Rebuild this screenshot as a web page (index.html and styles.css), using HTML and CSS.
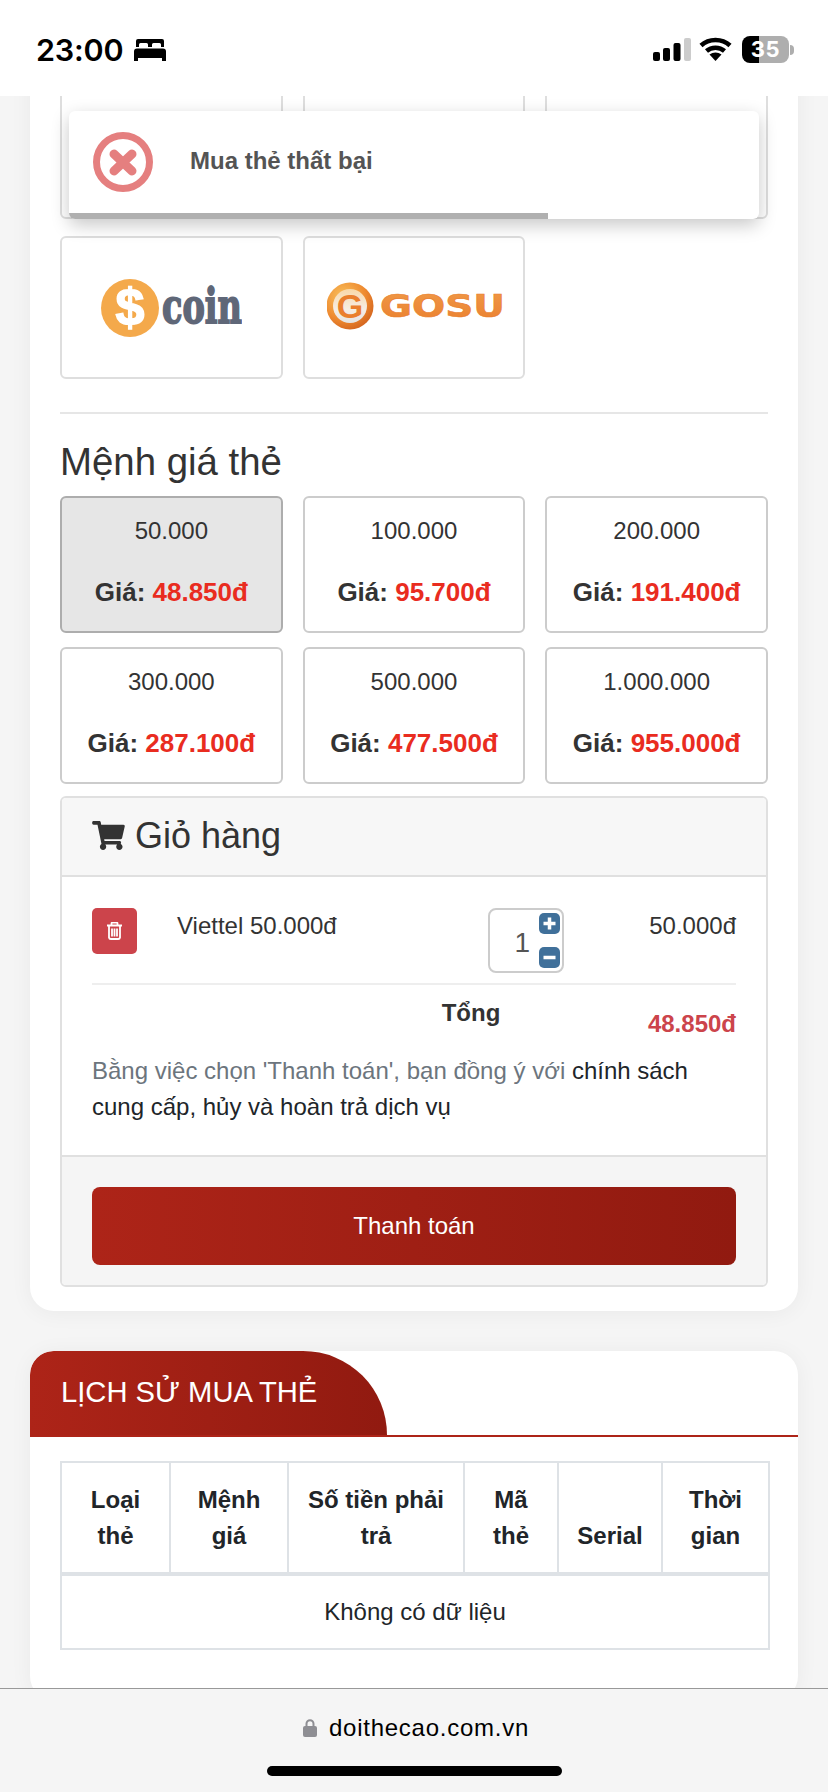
FILE: index.html
```html
<!DOCTYPE html>
<html lang="vi">
<head>
<meta charset="utf-8">
<title>Mua thẻ</title>
<link rel="stylesheet" href="styles.css">
</head>
<body>
<div class="phone">
  <header class="status">
    <div class="status-left">
      <span class="time">23:00</span>
      <svg class="bed" viewBox="0 0 32 22"><path d="M4 0h24a2 2 0 0 1 2 2v6h-3V5.500a1.500 1.500 0 0 0-1.500-1.500h-6A1.500 1.500 0 0 0 18 5.500V8h-4V5.500A1.500 1.500 0 0 0 12.500 4h-6A1.500 1.500 0 0 0 5 5.500V8H2V2a2 2 0 0 1 2-2z"/><path d="M3 9.500h26a3 3 0 0 1 3 3V19H0v-6.500a3 3 0 0 1 3-3zM0 19h4v3H0zM28 19h4v3h-4z"/></svg>
    </div>
    <div class="status-right">
      <svg class="signal" viewBox="0 0 38 23"><rect y="14" width="7" height="9" rx="2"/><rect x="10" y="10" width="7" height="13" rx="2"/><rect x="20.500" y="5" width="7" height="18" rx="2"/><rect class="signal-off" x="31" width="7" height="23" rx="2"/></svg>
      <svg class="wifi" viewBox="0 0 33 24"><path class="arc" d="M2 8.500C10 1 23 1 31 8.500"/><path class="arc" d="M7.500 14C12.500 9.500 20.500 9.500 25.500 14"/><path d="M16.500 24l-6-6.500c3.500-2.800 8.500-2.800 12 0z"/></svg>
      <div class="battery"><span>35</span></div>
      <i class="battery-nub"></i>
    </div>
  </header>

  <main class="page">
    <div class="toast">
      <svg class="toast-icon" viewBox="0 0 60 60"><circle cx="30" cy="30" r="26.500"/><path d="M21 22l18 17M39 22L21 39"/></svg>
      <span class="toast-text">Mua thẻ thất bại</span>
      <i class="toast-bar"></i>
    </div>

    <section class="card card-buy">
      <div class="providers">
        <div class="provider"></div>
        <div class="provider"></div>
        <div class="provider"></div>
        <div class="provider">
          <svg class="logo-scoin" viewBox="0 0 141 58">
            <circle cx="29" cy="29" r="29"/>
            <text class="scoin-dollar" x="29" y="46" text-anchor="middle">$</text>
            <text class="scoin-word" transform="translate(61 44) scale(.7 1)">coin</text>
          </svg>
        </div>
        <div class="provider">
          <svg class="logo-gosu" viewBox="0 0 176 48">
            <defs>
              <radialGradient id="orb" cx=".35" cy=".3" r=".8"><stop offset="0" stop-color="#f9c15c"/><stop offset=".6" stop-color="#ee8a30"/><stop offset="1" stop-color="#cf5e1c"/></radialGradient>
              <linearGradient id="orbInner" x1="0" y1="0" x2="0" y2="1"><stop offset="0" stop-color="#f9d8a8"/><stop offset=".6" stop-color="#f6ede4"/><stop offset="1" stop-color="#e4e4e4"/></linearGradient>
              <linearGradient id="gosuText" x1="0" y1="0" x2="0" y2="1"><stop offset="0" stop-color="#f09a48"/><stop offset="1" stop-color="#ea7f2e"/></linearGradient>
            </defs>
            <circle cx="23" cy="24" r="23.500" fill="url(#orb)"/>
            <circle cx="23" cy="24" r="17" fill="url(#orbInner)"/>
            <text class="gosu-g" x="23" y="36" text-anchor="middle">G</text>
            <text class="gosu-word" x="53" y="35" textLength="125" lengthAdjust="spacingAndGlyphs" fill="url(#gosuText)">GOSU</text>
          </svg>
        </div>
      </div>

      <hr class="divider">
      <h3 class="section-title">Mệnh giá thẻ</h3>

      <div class="prices">
        <div class="price is-active"><span>50.000</span><b>Giá: <em>48.850đ</em></b></div>
        <div class="price"><span>100.000</span><b>Giá: <em>95.700đ</em></b></div>
        <div class="price"><span>200.000</span><b>Giá: <em>191.400đ</em></b></div>
        <div class="price"><span>300.000</span><b>Giá: <em>287.100đ</em></b></div>
        <div class="price"><span>500.000</span><b>Giá: <em>477.500đ</em></b></div>
        <div class="price"><span>1.000.000</span><b>Giá: <em>955.000đ</em></b></div>
      </div>

      <div class="cart">
        <div class="cart-head">
          <svg class="cart-icon" viewBox="0 0 576 512"><path d="M528.120 301.319l47.273-208C578.806 78.301 567.391 64 551.990 64H159.208l-9.166-44.810C147.758 8.021 137.930 0 126.529 0H24C10.745 0 0 10.745 0 24v16c0 13.255 10.745 24 24 24h69.883l70.248 343.435C147.325 417.100 136 435.222 136 456c0 30.928 25.072 56 56 56s56-25.072 56-56c0-15.674-6.447-29.835-16.824-40h209.647C430.447 426.165 424 440.326 424 456c0 30.928 25.072 56 56 56s56-25.072 56-56c0-22.172-12.888-41.332-31.579-50.405l5.517-24.276c3.413-15.018-8.002-29.319-23.403-29.319H218.117l-6.545-32h293.145c11.206 0 20.920-7.754 23.403-18.681z"/></svg>
          <span>Giỏ hàng</span>
        </div>
        <div class="cart-body">
          <div class="cart-item">
            <button class="trash" type="button">
              <svg viewBox="0 0 15 18"><path class="trash-lid" d="M0 3.500h15M4.500 3V1.500a.800.800 0 0 1 .8-.8h4.400a.800.800 0 0 1 .8.800V3"/><path class="trash-can" d="M2 4v11.500A1.800 1.800 0 0 0 3.800 17h7.400a1.800 1.800 0 0 0 1.800-1.500V4M5 6.500v8M7.500 6.500v8M10 6.500v8"/></svg>
            </button>
            <span class="item-name">Viettel 50.000đ</span>
            <div class="qty">
              <span class="qty-value">1</span>
              <div class="qty-buttons">
                <i class="qty-btn"><svg viewBox="0 0 21 21"><path d="M10.500 4.500v12M4.500 10.500h12"/></svg></i>
                <i class="qty-btn"><svg viewBox="0 0 21 21"><path d="M4.500 10.500h12"/></svg></i>
              </div>
            </div>
            <span class="item-price">50.000đ</span>
          </div>
          <div class="cart-total">
            <strong class="total-label">Tổng</strong>
            <strong class="total-value">48.850đ</strong>
          </div>
          <p class="terms">Bằng việc chọn 'Thanh toán', bạn đồng ý với <a>chính sách</a> <a>cung cấp, hủy và hoàn trả dịch vụ</a></p>
        </div>
        <div class="cart-foot">
          <button class="pay" type="button">Thanh toán</button>
        </div>
      </div>
    </section>

    <section class="card card-history">
      <div class="tab-line"><h2 class="tab">LỊCH SỬ MUA THẺ</h2></div>
      <table class="history">
        <colgroup><col class="c1"><col class="c2"><col class="c3"><col class="c4"><col class="c5"><col class="c6"></colgroup>
        <thead>
          <tr><th>Loại thẻ</th><th>Mệnh giá</th><th>Số tiền phải trả</th><th>Mã thẻ</th><th>Serial</th><th>Thời gian</th></tr>
        </thead>
        <tbody>
          <tr><td colspan="6">Không có dữ liệu</td></tr>
        </tbody>
      </table>
    </section>
  </main>

  <footer class="urlbar">
    <div class="url">
      <svg class="lock" viewBox="0 0 14 18"><path class="lock-shackle" d="M3.500 8V4.800a3.500 3.500 0 0 1 7 0V8"/><rect y="7" width="14" height="11" rx="2"/></svg>
      <span>doithecao.com.vn</span>
    </div>
    <i class="home"></i>
  </footer>
</div>
</body>
</html>
```

FILE: styles.css
```css
* { box-sizing: border-box; }
html, body { margin: 0; padding: 0; }
body { background: #f5f5f5; font-family: "Liberation Sans", Arial, sans-serif; color: #333; font-size: 24px; line-height: 36px; }
.phone { width: 828px; height: 1792px; display: flex; flex-direction: column; overflow: hidden; }

/* status bar */
.status { flex: 0 0 96px; background: #fff; display: flex; justify-content: space-between; padding: 36px 34px 0 36px; position: relative; z-index: 3; }
.status-left { display: flex; align-items: flex-start; gap: 11px; height: 28px; }
.time { font-family: Inter, "Liberation Sans", sans-serif; font-weight: 600; font-size: 30.500px; line-height: 28px; color: #000; letter-spacing: -.2px; }
.bed { width: 32px; height: 22px; margin-top: 3px; fill: #000; }
.status-right { display: flex; align-items: flex-start; height: 28px; }
.signal { width: 38px; height: 23px; margin-top: 2px; fill: #000; }
.signal-off { fill: #ccc; }
.wifi { width: 33px; height: 24px; margin: 1px 0 0 8px; fill: #000; }
.wifi .arc { fill: none; stroke: #000; stroke-width: 4.500; stroke-linecap: butt; }
.battery { width: 47px; height: 27px; margin-left: 10px; border-radius: 8px; background: linear-gradient(90deg, #000 0 36%, #aeaeae 36% 100%); text-align: center; }
.battery span { display: block; font-family: Inter, "Liberation Sans", sans-serif; font-weight: 700; font-size: 22px; line-height: 27px; color: #fff; letter-spacing: .5px; }
.battery-nub { width: 4px; height: 10px; margin: 9px 0 0 1px; background: #aeaeae; border-radius: 0 4px 4px 0; }

/* page */
.page { flex: 1 1 auto; min-height: 0; padding: 0 30px; overflow: hidden; position: relative; }
.card { background: #fff; border-radius: 24px; box-shadow: 0 2px 22px rgba(0, 0, 0, .05); padding: 0 30px; }
.card-buy { margin-top: -40px; padding-top: 20px; padding-bottom: 24px; }
.card-history { margin-top: 40px; padding: 0 0 50px; overflow: hidden; }

/* toast */
.toast { position: absolute; z-index: 2; top: 15px; left: 69px; width: 690px; height: 108px; background: #fff; border-radius: 6px; box-shadow: 0 6px 18px rgba(0, 0, 0, .22); display: flex; align-items: center; padding: 0 0 6px 24px; overflow: hidden; }
.toast-icon { width: 60px; height: 60px; fill: none; stroke: #e57f7f; }
.toast-icon circle { stroke-width: 7; }
.toast-icon path { stroke-width: 9; stroke-linecap: round; }
.toast-text { margin: 0 0 2px 37px; font-weight: 700; color: #545454; }
.toast-bar { position: absolute; left: 0; bottom: 0; width: 479px; height: 6px; background: #b0b0b0; }

/* providers */
.providers { display: grid; grid-template-columns: repeat(3, 1fr); gap: 17px 20px; }
.provider { height: 143px; border: 2px solid #dedede; border-radius: 6px; background: #fff; display: flex; align-items: center; justify-content: center; }
.logo-scoin { width: 141px; height: 58px; }
.logo-scoin circle { fill: #f4a94b; }
.scoin-dollar { font-family: "Liberation Sans", sans-serif; font-weight: 700; font-size: 52px; fill: #fff; stroke: #fff; stroke-width: 1.500; }
.scoin-word { font-family: "DejaVu Serif", serif; font-weight: 700; font-size: 48px; fill: #5f6778; stroke: #5f6778; stroke-width: 1.800; }
.logo-gosu { width: 176px; height: 48px; margin: -4px 0 0 2px; }
.gosu-g { font-family: "Liberation Sans", sans-serif; font-weight: 700; font-size: 34px; fill: #ea7f2e; }
.gosu-word { font-family: "DejaVu Sans", sans-serif; font-weight: 700; font-size: 32px; stroke: #ea7f2e; stroke-width: .6px; }

.divider { border: 0; border-top: 2px solid #e6e6e6; margin: 33px 0 0; }
.section-title { margin: 26px 0 12px; font-weight: 400; font-size: 38.400px; line-height: 44px; color: #333; }

/* prices */
.prices { display: grid; grid-template-columns: repeat(3, 1fr); gap: 14px 20px; }
.price { border: 2px solid #ccc; border-radius: 6px; padding: 15px 0 21px; display: flex; flex-direction: column; gap: 25px; text-align: center; }
.price.is-active { background: #e6e6e6; border-color: #adadad; }
.price b { font-size: 26px; }
.price em { font-style: normal; color: #e92c1f; }

/* cart */
.cart { margin-top: 12px; border: 2px solid #e0e0e0; border-radius: 6px; overflow: hidden; }
.cart-head { height: 79px; background: #f7f7f7; border-bottom: 2px solid #e0e0e0; padding: 0 0 2px 30px; display: flex; align-items: center; gap: 10px; font-size: 36px; }
.cart-icon { width: 33px; height: 29px; fill: #333; }
.cart-body { padding: 31px 30px 30px; }
.cart-item { display: flex; align-items: flex-start; height: 77px; border-bottom: 2px solid #eee; }
.trash { width: 45px; height: 46px; padding: 0; border: 0; border-radius: 5px; background: #cc444b; display: flex; align-items: center; justify-content: center; }
.trash svg { width: 15px; height: 18px; fill: none; stroke: #fff; stroke-width: 1.800; }
.item-name { margin: 0 auto 0 40px; white-space: nowrap; }
.qty { width: 76px; height: 65px; border: 2px solid #ccc; border-radius: 8px; display: flex; padding: 3px 2px 3px 0; }
.qty-value { flex: 1; text-align: right; padding-right: 9px; font-size: 28px; line-height: 59px; color: #555; }
.qty-buttons { display: flex; flex-direction: column; justify-content: space-between; }
.qty-btn { display: block; width: 21px; height: 21px; border-radius: 5px; background: #40709a; }
.qty-btn svg { display: block; width: 21px; height: 21px; fill: none; stroke: #fff; stroke-width: 3.500; }
.item-price { width: 172px; text-align: right; }
.cart-total { display: grid; grid-template-columns: 286px 186px 172px; padding-top: 10px; }
.total-label { grid-column: 2; text-align: center; }
.total-value { grid-column: 3; text-align: right; color: #cc444b; margin-top: 11px; }
.terms { margin: 11px 0 0; color: #6c757d; }
.terms a { color: #212529; }
.cart-foot { background: #f5f5f5; border-top: 2px solid #e0e0e0; padding: 30px 30px 20px; }
.pay { display: block; width: 100%; height: 78px; border: 0; border-radius: 8px; background: linear-gradient(90deg, #ad2418, #911a10); color: #fff; font: 24px/36px "Liberation Sans", Arial, sans-serif; }

/* history */
.tab-line { border-bottom: 2px solid #ad2418; }
.tab { width: 357px; height: 84px; margin: 0; padding: 0 0 2px 31px; border-radius: 24px 88px 0 0; background: linear-gradient(90deg, #ad2418, #911a10); color: #fff; font-weight: 400; font-size: 29.200px; line-height: 82px; white-space: nowrap; }
.history { width: 708px; margin: 24px 30px 0; border-collapse: collapse; table-layout: fixed; color: #212529; text-align: center; }
.history th, .history td { border: 2px solid #dee2e6; }
.history th { padding: 19px 12px 18px; border-bottom-width: 4px; vertical-align: bottom; font-weight: 700; }
.history td { padding: 18px 12px 18px; }
.c1 { width: 109px; }
.c2 { width: 118px; }
.c3 { width: 176px; }
.c4 { width: 94px; }
.c5 { width: 104px; }
.c6 { width: 107px; }

/* url bar */
.urlbar { flex: 0 0 104px; background: #f5f5f5; border-top: 1px solid #999; position: relative; z-index: 3; display: flex; flex-direction: column; align-items: center; }
.url { display: flex; align-items: center; gap: 12px; margin: 21px 0 0 4px; color: #000; letter-spacing: .75px; }
.lock { width: 14px; height: 18px; fill: #8e8e93; }
.lock-shackle { fill: none; stroke: #8e8e93; stroke-width: 2; }
.home { display: block; width: 295px; height: 10px; margin-top: 20px; border-radius: 5px; background: #000; }
```
